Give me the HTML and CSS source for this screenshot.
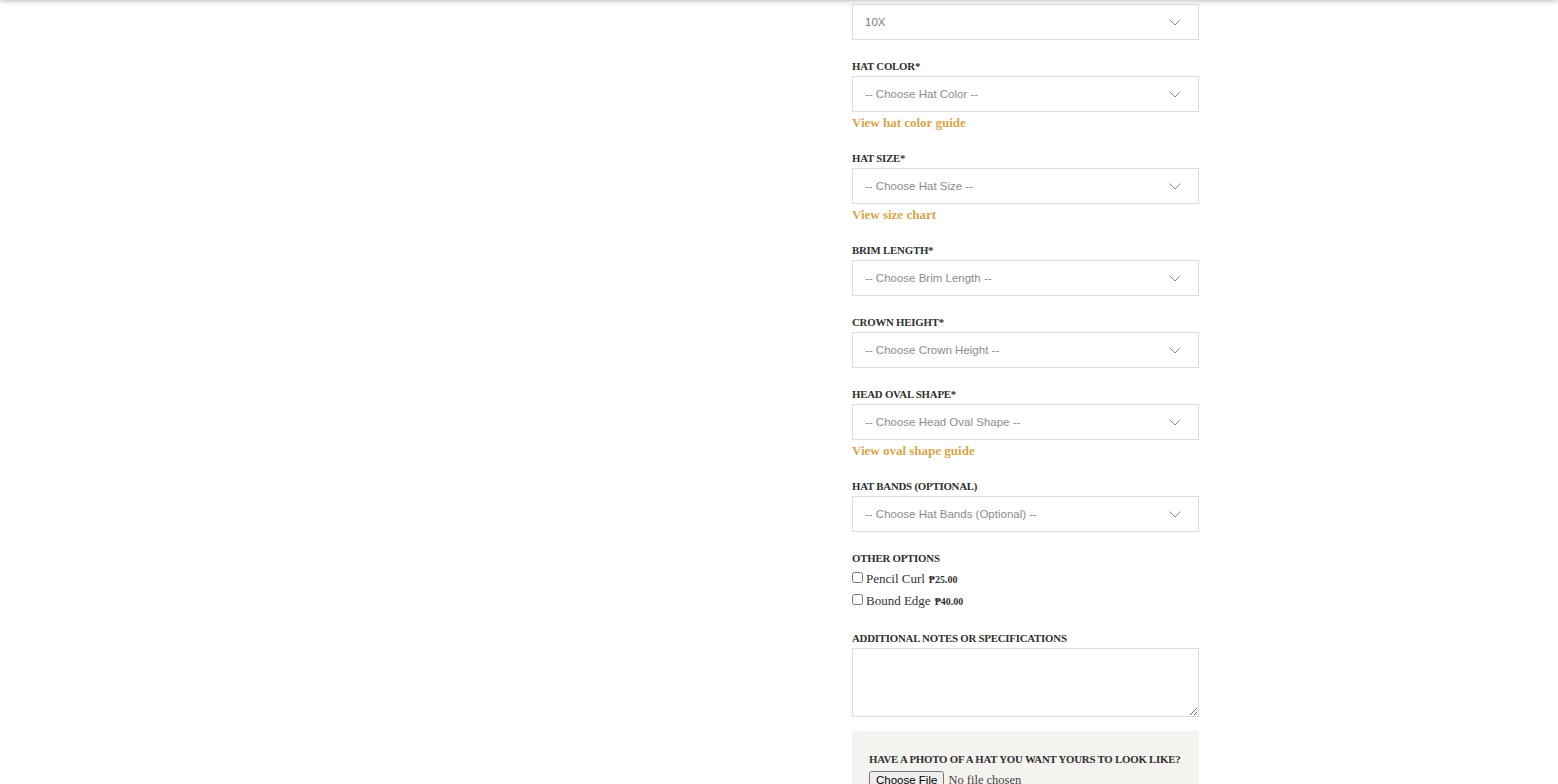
FILE: index.html
```html
<!DOCTYPE html>
<html>
<head>
    <title>Custom Hat Order</title>
    <link rel="stylesheet" href="styles.css">
</head>
<body>
    <div class="site-header"></div>
    <div class="product">
        <div class="gallery"></div>
        <form class="options">
            <div class="field first">
                <div class="select-wrap">
                    <select class="select value">
                        <option>10X</option>
                    </select>
                    <svg class="chevron" viewBox="0 0 12 7"><path d="M0.5 0.5 L6 6 L11.5 0.5"/></svg>
                </div>
            </div>

            <div class="field">
                <label class="label">HAT COLOR*</label>
                <div class="select-wrap">
                    <select class="select">
                        <option>-- Choose Hat Color --</option>
                    </select>
                    <svg class="chevron" viewBox="0 0 12 7"><path d="M0.5 0.5 L6 6 L11.5 0.5"/></svg>
                </div>
                <a class="guide" href="#">View hat color guide</a>
            </div>

            <div class="field">
                <label class="label">HAT SIZE*</label>
                <div class="select-wrap">
                    <select class="select">
                        <option>-- Choose Hat Size --</option>
                    </select>
                    <svg class="chevron" viewBox="0 0 12 7"><path d="M0.5 0.5 L6 6 L11.5 0.5"/></svg>
                </div>
                <a class="guide" href="#">View size chart</a>
            </div>

            <div class="field">
                <label class="label">BRIM LENGTH*</label>
                <div class="select-wrap">
                    <select class="select">
                        <option>-- Choose Brim Length --</option>
                    </select>
                    <svg class="chevron" viewBox="0 0 12 7"><path d="M0.5 0.5 L6 6 L11.5 0.5"/></svg>
                </div>
            </div>

            <div class="field">
                <label class="label">CROWN HEIGHT*</label>
                <div class="select-wrap">
                    <select class="select">
                        <option>-- Choose Crown Height --</option>
                    </select>
                    <svg class="chevron" viewBox="0 0 12 7"><path d="M0.5 0.5 L6 6 L11.5 0.5"/></svg>
                </div>
            </div>

            <div class="field">
                <label class="label">HEAD OVAL SHAPE*</label>
                <div class="select-wrap">
                    <select class="select">
                        <option>-- Choose Head Oval Shape --</option>
                    </select>
                    <svg class="chevron" viewBox="0 0 12 7"><path d="M0.5 0.5 L6 6 L11.5 0.5"/></svg>
                </div>
                <a class="guide" href="#">View oval shape guide</a>
            </div>

            <div class="field">
                <label class="label">HAT BANDS (OPTIONAL)</label>
                <div class="select-wrap">
                    <select class="select">
                        <option>-- Choose Hat Bands (Optional) --</option>
                    </select>
                    <svg class="chevron" viewBox="0 0 12 7"><path d="M0.5 0.5 L6 6 L11.5 0.5"/></svg>
                </div>
            </div>

            <div class="field">
                <label class="label">OTHER OPTIONS</label>
                <label class="check"><input type="checkbox"> Pencil Curl <b class="price">₱25.00</b></label>
                <label class="check"><input type="checkbox"> Bound Edge <b class="price">₱40.00</b></label>
            </div>

            <div class="field">
                <label class="label">ADDITIONAL NOTES OR SPECIFICATIONS</label>
                <textarea class="notes"></textarea>
            </div>

            <div class="upload">
                <label class="label">HAVE A PHOTO OF A HAT YOU WANT YOURS TO LOOK LIKE?</label>
                <input type="file" class="file">
            </div>
        </form>
    </div>
</body>
</html>
```

FILE: styles.css
```css
body {
    margin: 0;
    background: #fff;
    font-family: "Liberation Serif", "DejaVu Serif", serif;
    color: #333;
    overflow: hidden;
}

/* header sits above the viewport, only its shadow shows */
.site-header {
    position: fixed;
    top: -10px;
    left: 0;
    right: 0;
    height: 10px;
    background: #fff;
    box-shadow: 0 0 6px rgba(0, 0, 0, 0.35);
    z-index: 5;
}

.product {
    display: grid;
    grid-template-columns: 852px 347px;
}

.options {
    display: flex;
    flex-direction: column;
}

.field {
    display: flex;
    flex-direction: column;
    margin-bottom: 18px;
}

.field.first {
    margin-top: 4px;
}

.label {
    font-size: 10.8px;
    font-weight: bold;
    line-height: 14px;
    padding-top: 1px;
    margin-bottom: 3px;
    color: #2f2f2f;
    letter-spacing: -0.2px;
    white-space: nowrap;
}

.select-wrap {
    position: relative;
}

.select {
    appearance: none;
    -webkit-appearance: none;
    width: 100%;
    height: 36px;
    box-sizing: border-box;
    border: 1px solid #dcdcdc;
    border-radius: 0;
    background: #fff;
    padding: 0 12px;
    font-family: "Liberation Sans", Arial, sans-serif;
    font-size: 11.5px;
    color: #8c8c8c;
    outline: none;
}

.select.value {
    color: #7a7a7a;
}

.chevron {
    position: absolute;
    right: 18px;
    top: 15px;
    width: 12px;
    height: 7px;
    fill: none;
    stroke: #8c8c8c;
    stroke-width: 1;
    pointer-events: none;
}

.guide {
    margin-top: 2px;
    font-size: 13px;
    line-height: 18px;
    font-weight: bold;
    color: #d7a54d;
    text-decoration: none;
    align-self: flex-start;
}

.check {
    display: flex;
    align-items: center;
    height: 22px;
    font-size: 13px;
    color: #333;
}

.check input {
    margin: 0 3px 3px 0;
    width: 11px;
    height: 11px;
}

.price {
    font-size: 10px;
    margin-left: 4px;
    color: #333;
}

.notes {
    height: 69px;
    box-sizing: border-box;
    border: 1px solid #dcdcdc;
    resize: vertical;
    outline: none;
    margin-bottom: -4px;
}

.upload {
    background: #f4f3ef;
    padding: 20px 17px 20px;
    display: flex;
    flex-direction: column;
}

.upload .label {
    margin-bottom: 5px;
}

.file {
    font-family: "Liberation Serif", serif;
    font-size: 12.5px;
    color: #444;
}

.file::file-selector-button {
    font-family: "Liberation Sans", Arial, sans-serif;
    font-size: 11.5px;
    padding: 1px 5px;
    margin-right: 4px;
}
```
